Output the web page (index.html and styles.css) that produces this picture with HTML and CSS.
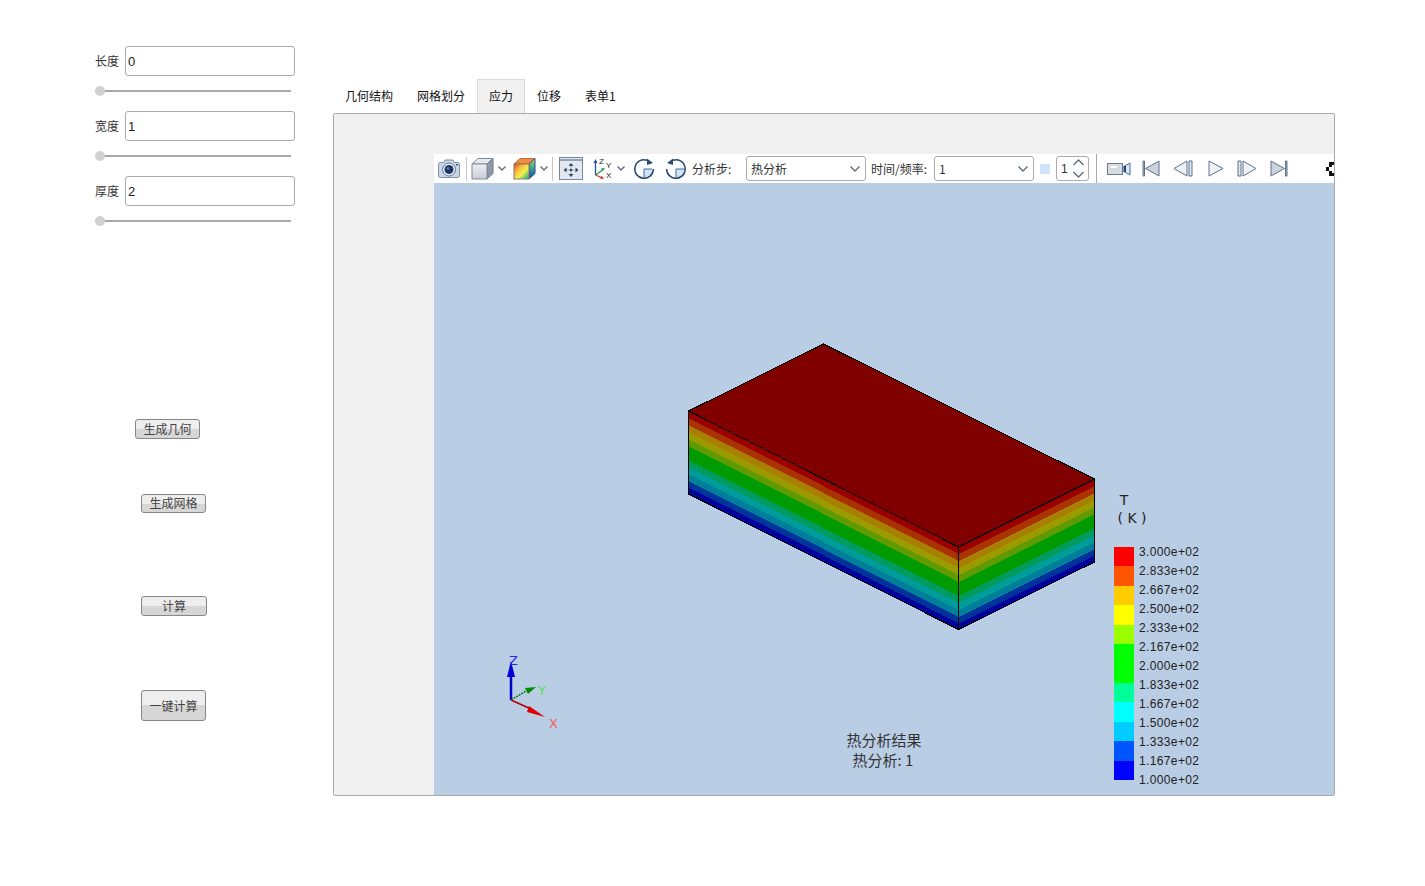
FILE: index.html
```html
<!DOCTYPE html>
<html lang="zh">
<head>
<meta charset="utf-8">
<title>热分析</title>
<link rel="stylesheet" href="styles.css">
</head>
<body>
<div class="page">
  <aside class="side">
    <div class="field">
      <div class="field-row"><label class="field-label">长度</label><input class="field-input" type="text" value="0"></div>
      <input class="slider" type="range" min="0" max="100" value="0">
    </div>
    <div class="field">
      <div class="field-row"><label class="field-label">宽度</label><input class="field-input" type="text" value="1"></div>
      <input class="slider" type="range" min="0" max="100" value="0">
    </div>
    <div class="field">
      <div class="field-row"><label class="field-label">厚度</label><input class="field-input" type="text" value="2"></div>
      <input class="slider" type="range" min="0" max="100" value="0">
    </div>
    <button class="btn btn-geo">生成几何</button>
    <button class="btn btn-mesh">生成网格</button>
    <button class="btn btn-calc">计算</button>
    <button class="btn btn-auto">一键计算</button>
  </aside>

  <main class="main">
    <nav class="tabs">
      <span class="tab">几何结构</span>
      <span class="tab">网格划分</span>
      <span class="tab tab-active">应力</span>
      <span class="tab">位移</span>
      <span class="tab">表单1</span>
    </nav>
    <section class="panel">
      <div class="view">
        <div class="toolbar">
          <svg class="ti ti-camera" width="24" height="22" viewBox="0 0 24 22"><path d="M1.500 6.500q0-2 2-2h3l1.500-2.500h8l1.500 2.500h3q2 0 2 2v11q0 2-2 2h-17q-2 0-2-2z" fill="#c9d6e8" stroke="#7f8fa6"/><circle cx="12" cy="11.500" r="6.500" fill="#eef2f8" stroke="#5d7391"/><circle cx="12" cy="11.500" r="4.500" fill="#1f3768"/><circle cx="11" cy="10.500" r="1.300" fill="#5f7fb5"/><rect x="19" y="6" width="2" height="1.500" fill="#4a5a75"/></svg>
          <span class="sep sep-a"></span>
          <svg class="ti ti-cube" width="23" height="23" viewBox="0 0 23 23"><defs><linearGradient id="cf" x1="0" y1="0" x2="0" y2="1"><stop offset="0" stop-color="#f0f1f4"/><stop offset="1" stop-color="#c9ccd4"/></linearGradient></defs><path d="M1 7l6-5.500h15l-6 5.500z" fill="#e7e9ee" stroke="#7f8b9d"/><path d="M16 7l6-5.500v15l-6 5.500z" fill="#8f99aa" stroke="#6f7b8e"/><rect x="1" y="7" width="15" height="15" fill="url(#cf)" stroke="#7f8b9d"/></svg>
          <svg class="ti ti-chev1" width="8" height="5" viewBox="0 0 8 5"><path d="M.5.500l3.500 3.500 3.500-3.500" class="chev"/></svg>
          <svg class="ti ti-rcube" width="23" height="23" viewBox="0 0 23 23"><defs><linearGradient id="rf" x1="0" y1="0" x2="1" y2="1"><stop offset="0" stop-color="#e8402a"/><stop offset=".35" stop-color="#f7c33c"/><stop offset=".6" stop-color="#f4ee4e"/><stop offset=".85" stop-color="#58c46a"/><stop offset="1" stop-color="#3aa0d8"/></linearGradient><linearGradient id="rs" x1="0" y1="0" x2="0" y2="1"><stop offset="0" stop-color="#d8d04a"/><stop offset=".4" stop-color="#3fb08a"/><stop offset="1" stop-color="#1440b8"/></linearGradient></defs><path d="M1 7l6-5.500h15l-6 5.500z" fill="#f08a3c" stroke="#c96a4a"/><path d="M16 7l6-5.500v15l-6 5.500z" fill="url(#rs)" stroke="#2a4a90"/><rect x="1" y="7" width="15" height="15" fill="url(#rf)" stroke="#8a7a6a"/></svg>
          <svg class="ti ti-chev2" width="8" height="5" viewBox="0 0 8 5"><path d="M.5.500l3.500 3.500 3.500-3.500" class="chev"/></svg>
          <span class="sep sep-b"></span>
          <svg class="ti ti-fit" width="24" height="23" viewBox="0 0 24 23"><rect x=".5" y=".5" width="23" height="22" fill="#e3e8f0" stroke="#7488a3"/><path d="M1 3h22" stroke="#7488a3" stroke-width="1.500"/><path d="M12 7v12M6 13h12" stroke="#9fb0c6"/><path d="M12 6l-2.500 3h5zM12 20l-2.500-3h5zM4.500 13l3-2.500v5zM19.500 13l-3-2.500v5z" fill="#2c4668"/><circle cx="12" cy="13" r="1.300" fill="#2c4668"/></svg>
          <svg class="ti ti-triad" width="20" height="23" viewBox="0 0 20 23"><path d="M2.500 18V5" stroke="#2a4fa8" stroke-width="1.300"/><path d="M2.500 2l-2 4h4z" fill="#2a4fa8"/><path d="M2.500 18l7-5" stroke="#1f9a4a" stroke-width="1.300"/><path d="M12 11l-4 .5 1.800 2.700z" fill="#1f9a4a"/><path d="M2.500 18l7 3" stroke="#d8343a" stroke-width="1.300"/><path d="M11 22l-3.800-.2 1.300-3z" fill="#d8343a"/><text x="6" y="6.500" class="ti-txt">Z</text><text x="13" y="10.500" class="ti-txt">Y</text><text x="13" y="21" class="ti-txt">X</text></svg>
          <svg class="ti ti-chev3" width="8" height="5" viewBox="0 0 8 5"><path d="M.5.500l3.500 3.500 3.500-3.500" class="chev"/></svg>
          <svg class="ti ti-rot1" width="22" height="22" viewBox="0 0 22 22"><path d="M11 11h8v8h-8z" fill="#cfe6fa"/><path d="M11 11h8M11 11v9" stroke="#3f6d9c"/><path d="M14 2.200A9.300 9.300 0 1 0 20.400 11" fill="none" stroke="#2c4a6b" stroke-width="1.500"/><path d="M14 .5l6 4.500-6 2z" fill="#2c4a6b"/></svg>
          <svg class="ti ti-rot2" width="22" height="22" viewBox="0 0 22 22"><path d="M11 11h8v8h-8z" fill="#cfe6fa"/><path d="M11 11h8M11 11v9" stroke="#3f6d9c"/><path d="M8 2.200A9.300 9.300 0 1 1 1.600 11" fill="none" stroke="#2c4a6b" stroke-width="1.500"/><path d="M8 .5l-6 4.500 6 2z" fill="#2c4a6b"/></svg>
          <span class="tb-label tb-step">分析步:</span>
          <div class="combo combo-step"><span class="lift">热分析</span><svg width="10" height="6" viewBox="0 0 10 6"><path d="M.5.500l4.500 4.500 4.500-4.500" class="chev"/></svg></div>
          <span class="tb-label tb-time">时间/频率:</span>
          <div class="combo combo-time"><span class="lift">1</span><svg width="10" height="6" viewBox="0 0 10 6"><path d="M.5.500l4.500 4.500 4.500-4.500" class="chev"/></svg></div>
          <span class="swatch"></span>
          <div class="spin"><span>1</span><svg width="11" height="19" viewBox="0 0 11 19"><path d="M.5 6l5-5 5 5M.5 13l5 5 5-5" class="chev"/></svg></div>
          <span class="sep sep-c"></span>
          <svg class="ti ti-video" width="24" height="14" viewBox="0 0 24 14"><rect x=".5" y="1.500" width="15" height="11" fill="#d6dae1" stroke="#6f7b8e"/><rect x="3" y="4" width="7" height="2" fill="#fff"/><path d="M16 5l7-4v12l-7-4z" fill="#dbe7f5" stroke="#3f6d9c"/><path d="M17 4h2v6h-2z" fill="#2c4668"/></svg>
          <svg class="ti ti-first" width="18" height="17" viewBox="0 0 18 17"><path d="M1 1v15h1.500V1z" fill="#b9c2cf" stroke="#5f7189"/><path d="M17 1v15L3.500 8.500z" fill="#cdd3dc" stroke="#5f7189"/></svg>
          <svg class="ti ti-prev" width="20" height="17" viewBox="0 0 20 17"><path d="M14 1v15L1 8.500z" fill="#eef2f7" stroke="#5f7189"/><path d="M16 1h3v15h-3z" fill="#e3e8f0" stroke="#5f7189"/></svg>
          <svg class="ti ti-play" width="16" height="17" viewBox="0 0 16 17"><path d="M1 1v15l14-7.500z" fill="#eef2f7" stroke="#5f7189"/></svg>
          <svg class="ti ti-next" width="20" height="17" viewBox="0 0 20 17"><path d="M1 1h3v15H1z" fill="#e3e8f0" stroke="#5f7189"/><path d="M6 1v15l13-7.500z" fill="#eef2f7" stroke="#5f7189"/></svg>
          <svg class="ti ti-last" width="18" height="17" viewBox="0 0 18 17"><path d="M1 1v15l13.500-7.500z" fill="#cdd3dc" stroke="#5f7189"/><path d="M15.500 1H17v15h-1.500z" fill="#b9c2cf" stroke="#5f7189"/></svg>
          <svg class="ti ti-full" width="9" height="14" viewBox="0 0 9 14"><path d="M3 0h6v3H6v2H3zM0 5h3v4H0zM3 9h3v2h3v3H3z" fill="#111"/></svg>
        </div>
        <svg class="scene" viewBox="434 183 900 612" width="900" height="612">
          <defs>
            <g id="bands" shape-rendering="crispEdges">
              <rect width="1" y="0" height="7" fill="#9b0000"/>
              <rect width="1" y="7" height="7" fill="#a83200"/>
              <rect width="1" y="14" height="7" fill="#a87f00"/>
              <rect width="1" y="21" height="7" fill="#9b9b00"/>
              <rect width="1" y="28" height="7" fill="#5f9b00"/>
              <rect width="1" y="35" height="14" fill="#009b00"/>
              <rect width="1" y="49" height="7" fill="#009b5f"/>
              <rect width="1" y="56" height="7" fill="#009b9b"/>
              <rect width="1" y="63" height="7" fill="#007f9b"/>
              <rect width="1" y="70" height="6.500" fill="#00329b"/>
              <rect width="1" y="76.500" height="6.500" fill="#00009b"/>
            </g>
          </defs>
          <use href="#bands" transform="matrix(270 136 0 1 688.500 411)"/>
          <use href="#bands" transform="matrix(136 -68 0 1 958.500 547)"/>
          <g class="edges" shape-rendering="crispEdges">
            <polygon points="823.500,344 1094.500,479 958.500,547 688.500,411" fill="#800000"/>
            <path d="M688.500 411V494L958.500 629.500L1094.500 562V479M958.500 547V629.500" fill="none"/>
          </g>
          <g class="triad">
            <path d="M511 700V672" stroke="#0000c8" stroke-width="2.500"/>
            <path d="M511 661l-4 16h8z" fill="#0000d0"/>
            <path d="M511 700l15-9" stroke="#007a00" stroke-width="1.500" stroke-dasharray="2 1"/>
            <path d="M536 687l-11 1 3 6z" fill="#008c00"/>
            <path d="M511 700l20 9" stroke="#b00000" stroke-width="1.500"/>
            <path d="M545 717l-16-11-2 6z" fill="#e00000"/>
            <text x="509" y="665" class="axis axis-z">Z</text>
            <text x="538" y="695" class="axis axis-y">Y</text>
            <text x="549" y="728" class="axis axis-x">X</text>
          </g>
          <text x="884" y="746" class="caption">热分析结果</text>
          <text x="883" y="766" class="caption">热分析: 1</text>
          <text x="1124" y="505" class="unit">T</text>
          <text x="1132" y="523" class="unit">( K )</text>
          <g shape-rendering="crispEdges">
            <rect x="1114" y="547" width="20" height="19.500" fill="#ff0000"/>
            <rect x="1114" y="566" width="20" height="20" fill="#ff5500"/>
            <rect x="1114" y="586" width="20" height="19" fill="#ffcc00"/>
            <rect x="1114" y="605" width="20" height="20" fill="#ffff00"/>
            <rect x="1114" y="625" width="20" height="19" fill="#99ff00"/>
            <rect x="1114" y="644" width="20" height="39" fill="#00ff00"/>
            <rect x="1114" y="683" width="20" height="19" fill="#00ff99"/>
            <rect x="1114" y="702" width="20" height="20" fill="#00ffff"/>
            <rect x="1114" y="722" width="20" height="19" fill="#00ccff"/>
            <rect x="1114" y="741" width="20" height="20" fill="#0055ff"/>
            <rect x="1114" y="761" width="20" height="19" fill="#0000ff"/>
          </g>
          <g class="legend">
            <text x="1139" y="556" textLength="60">3.000e+02</text>
            <text x="1139" y="575" textLength="60">2.833e+02</text>
            <text x="1139" y="594" textLength="60">2.667e+02</text>
            <text x="1139" y="613" textLength="60">2.500e+02</text>
            <text x="1139" y="632" textLength="60">2.333e+02</text>
            <text x="1139" y="651" textLength="60">2.167e+02</text>
            <text x="1139" y="670" textLength="60">2.000e+02</text>
            <text x="1139" y="689" textLength="60">1.833e+02</text>
            <text x="1139" y="708" textLength="60">1.667e+02</text>
            <text x="1139" y="727" textLength="60">1.500e+02</text>
            <text x="1139" y="746" textLength="60">1.333e+02</text>
            <text x="1139" y="765" textLength="60">1.167e+02</text>
            <text x="1139" y="784" textLength="60">1.000e+02</text>
          </g>
        </svg>
      </div>
    </section>
  </main>
</div>
</body>
</html>
```

FILE: styles.css
```css
* { box-sizing: border-box; }

html, body {
  margin: 0;
  padding: 0;
  background: #fff;
}

body {
  font-family: "Liberation Sans", "Noto Sans CJK SC", sans-serif;
  font-size: 12px;
  color: #222;
}

.page {
  display: flex;
  width: 1425px;
  height: 886px;
  overflow: hidden;
}

/* Left control column */
.side {
  width: 333px;
  flex: none;
  display: flex;
  flex-direction: column;
  align-items: flex-start;
  padding: 46px 0 0 95px;
}

.field {
  height: 65px;
  display: flex;
  flex-direction: column;
}

.field-row {
  display: flex;
  align-items: center;
  height: 30px;
}

.field-label {
  width: 30px;
  padding-bottom: 2px;
  font-size: 12px;
  color: #333;
}

.field-input {
  width: 170px;
  height: 30px;
  border: 1px solid #ababab;
  border-radius: 3px;
  padding: 0 2px;
  font: 13px "Liberation Sans", sans-serif;
  color: #222;
  background: #fff;
  outline: none;
}

.slider {
  -webkit-appearance: none;
  appearance: none;
  display: block;
  width: 196px;
  height: 10px;
  margin: 10px 0 0;
  padding: 0;
  background: transparent;
}

.slider::-webkit-slider-runnable-track {
  height: 2px;
  background: #a8a8a8;
}

.slider::-webkit-slider-thumb {
  -webkit-appearance: none;
  width: 10px;
  height: 10px;
  margin-top: -4px;
  border-radius: 50%;
  background: #d0d0d0;
}

.btn {
  flex: none;
  width: 65px;
  height: 20px;
  padding: 0;
  border: 1px solid #868686;
  border-radius: 3px;
  font: 12px "Noto Sans CJK SC", sans-serif;
  line-height: 1;
  color: #444;
  background: linear-gradient(#eeeeee 0, #eeeeee 50%, #d6d6d6 50%, #d6d6d6 100%);
}

.btn-geo { margin: 178px 0 0 40px; }
.btn-mesh { margin: 55px 0 0 46px; height: 19px; padding-bottom: 1px; }
.btn-calc { margin: 83px 0 0 46px; width: 66px; }
.btn-auto { margin: 74px 0 0 46px; height: 31px; }

/* Main area */
.main {
  width: 1002px;
  flex: none;
  padding-top: 79px;
}

.tabs {
  display: flex;
  height: 34px;
}

.tab {
  padding: 0 12px 2px;
  display: flex;
  align-items: center;
  font-family: "Noto Sans CJK SC", sans-serif;
  font-size: 12px;
  color: #111;
}

.tab-active {
  background: #f1f1f1;
  border: 1px solid #dadada;
  border-bottom: none;
  padding: 0 11px 2px;
}

.panel {
  height: 683px;
  border: 1px solid #a9a9a9;
  border-radius: 2px;
  background: #f1f1f1;
  padding: 40px 0 0 100px;
  overflow: hidden;
}

.view {
  width: 900px;
  display: flex;
  flex-direction: column;
}

.toolbar {
  height: 29px;
  background: #fff;
  display: flex;
  align-items: center;
  overflow: hidden;
  flex: none;
}

.ti { flex: none; display: block; }
.chev { fill: none; stroke: #5d6e80; stroke-width: 1.4; }
.ti-txt { font: 8px "Liberation Sans", sans-serif; fill: #222; }

.sep {
  flex: none;
  width: 1px;
  height: 24px;
  background: #c8c8c8;
}

.ti-camera { margin-left: 3px; }
.sep-a { margin-left: 5px; }
.ti-cube { margin-left: 4px; }
.ti-chev1 { margin-left: 4px; }
.ti-rcube { margin-left: 7px; }
.ti-chev2 { margin-left: 4px; }
.sep-b { margin-left: 4px; }
.ti-fit { margin-left: 6px; }
.ti-triad { margin-left: 10px; }
.ti-chev3 { margin-left: 4px; }
.ti-rot1 { margin-left: 8px; }
.ti-rot2 { margin-left: 10px; }

.tb-label {
  flex: none;
  padding-bottom: 1px;
  font-family: "Noto Sans CJK SC", sans-serif;
  font-size: 12px;
  color: #333;
  white-space: nowrap;
}

.tb-step { margin-left: 5px; width: 54px; }
.tb-time { margin-left: 5px; width: 63px; }

.combo {
  flex: none;
  height: 25px;
  display: flex;
  align-items: center;
  justify-content: space-between;
  padding: 0 5px 0 4px;
  border: 1px solid #ababab;
  border-radius: 3px;
  font-family: "Noto Sans CJK SC", sans-serif;
  font-size: 12px;
  color: #333;
  background: #fff;
}

.lift { padding-bottom: 1px; }

.combo-step { width: 120px; }
.combo-time { width: 100px; }

.swatch {
  flex: none;
  width: 10px;
  height: 10px;
  margin-left: 6px;
  background: #cfe4fb;
}

.spin {
  flex: none;
  width: 33px;
  height: 25px;
  margin-left: 6px;
  display: flex;
  align-items: center;
  justify-content: space-between;
  padding: 0 4px;
  border: 1px solid #ababab;
  border-radius: 3px;
  color: #333;
}

.sep-c { margin-left: 7px; height: 29px; background: #aaa; }
.ti-video { margin-left: 10px; }
.ti-first { margin-left: 11px; }
.ti-prev { margin-left: 13px; }
.ti-play { margin-left: 15px; }
.ti-next { margin-left: 13px; }
.ti-last { margin-left: 13px; }
.ti-full { margin-left: 38px; }

/* 3D scene */
.scene {
  display: block;
  background: #b9cde5;
  flex: none;
}

.edges { stroke: #000; stroke-width: 1; }

.axis { font: 13px "DejaVu Sans", sans-serif; }
.axis-z { fill: #2a2ae8; }
.axis-y { fill: #55e055; }
.axis-x { fill: #f06060; }

.caption {
  font-family: "Noto Sans CJK SC", sans-serif;
  font-size: 15px;
  fill: #333;
  text-anchor: middle;
}

.unit {
  font: 14px "DejaVu Sans", sans-serif;
  fill: #222;
  text-anchor: middle;
}

.legend text {
  font: 12px "Liberation Sans", sans-serif;
  fill: #222;
}
```
